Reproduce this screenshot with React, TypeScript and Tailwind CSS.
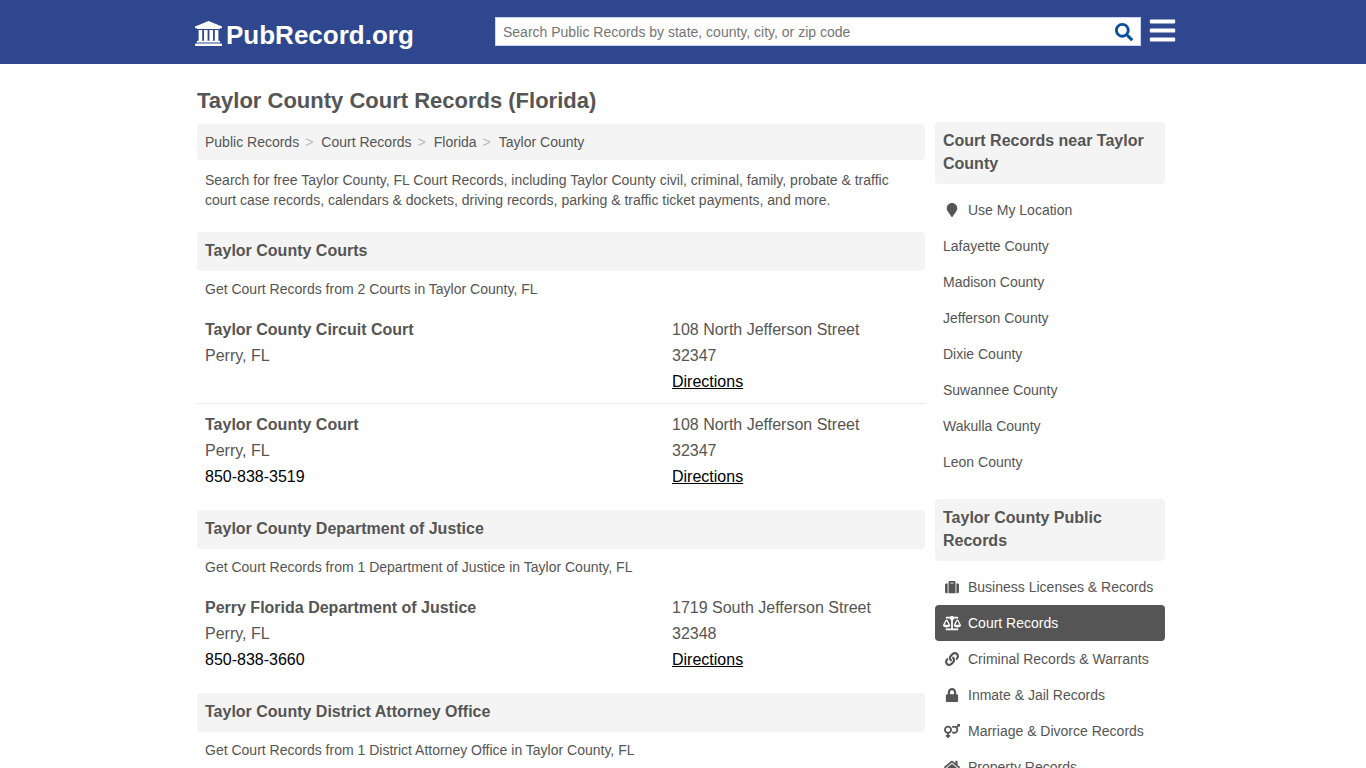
import type { ReactNode } from "react";
import type { IconType } from "react-icons";
import {
  FaBalanceScale,
  FaBars,
  FaHome,
  FaLink,
  FaLock,
  FaMapMarker,
  FaSearch,
  FaSuitcase,
  FaVenusMars,
} from "react-icons/fa";

type Office = {
  name: string;
  city: string;
  phone?: string;
  street: string;
  zip: string;
};

type OfficeGroup = { title: string; summary: string; offices: Office[] };

const crumbs = ["Public Records", "Court Records", "Florida", "Taylor County"];

const groups: OfficeGroup[] = [
  {
    title: "Taylor County Courts",
    summary: "Get Court Records from 2 Courts in Taylor County, FL",
    offices: [
      {
        name: "Taylor County Circuit Court",
        city: "Perry, FL",
        street: "108 North Jefferson Street",
        zip: "32347",
      },
      {
        name: "Taylor County Court",
        city: "Perry, FL",
        phone: "850-838-3519",
        street: "108 North Jefferson Street",
        zip: "32347",
      },
    ],
  },
  {
    title: "Taylor County Department of Justice",
    summary: "Get Court Records from 1 Department of Justice in Taylor County, FL",
    offices: [
      {
        name: "Perry Florida Department of Justice",
        city: "Perry, FL",
        phone: "850-838-3660",
        street: "1719 South Jefferson Street",
        zip: "32348",
      },
    ],
  },
  {
    title: "Taylor County District Attorney Office",
    summary: "Get Court Records from 1 District Attorney Office in Taylor County, FL",
    offices: [],
  },
];

const nearby = [
  "Lafayette County",
  "Madison County",
  "Jefferson County",
  "Dixie County",
  "Suwannee County",
  "Wakulla County",
  "Leon County",
];

const recordTypes: { label: string; icon: IconType; iconSize?: string; active?: boolean }[] = [
  { label: "Business Licenses & Records", icon: FaSuitcase },
  { label: "Court Records", icon: FaBalanceScale, iconSize: "size-[18px]", active: true },
  { label: "Criminal Records & Warrants", icon: FaLink },
  { label: "Inmate & Jail Records", icon: FaLock },
  { label: "Marriage & Divorce Records", icon: FaVenusMars, iconSize: "size-4" },
  { label: "Property Records", icon: FaHome, iconSize: "size-4" },
];

function CourthouseLogo() {
  return (
    <svg viewBox="0 0 1920 1792" fill="currentColor" aria-hidden="true" className="mt-[2px] mr-1 w-[27px] self-start">
      <path d="M960 0l960 384v128h-128q0 26-20.5 45t-48.5 19H197q-28 0-48.5-19T128 512H0V384zM256 640h256v768h128V640h256v768h128V640h256v768h128V640h256v768h59q28 0 48.5 19t20.5 45v64H128v-64q0-26 20.5-45t48.5-19h59V640zM1851 1600q28 0 48.5 19t20.5 45v128H0v-128q0-26 20.5-45t48.5-19h1782z" />
    </svg>
  );
}

function Header() {
  return (
    <header className="h-16 bg-[#2e478f]">
      <div className="mx-auto flex max-w-[988px] items-start pl-[6px]">
        <a href="#" className="flex w-[300px] shrink-0 items-center pt-[19px] text-white">
          <CourthouseLogo />
          <span className="text-[26px] leading-8 font-bold">PubRecord.org</span>
        </a>
        <form className="mt-[17px] flex h-[29px] min-w-0 flex-1 border border-[#ccd6ee] bg-white">
          <input
            type="search"
            aria-label="Search public records"
            placeholder="Search Public Records by state, county, city, or zip code"
            className="min-w-0 flex-1 px-[7px] text-sm text-[#555] outline-none placeholder:text-[#757575]"
          />
          <button type="submit" aria-label="Search" className="flex w-8 items-center justify-center text-[#0b4f9e]">
            <FaSearch className="size-[18px]" />
          </button>
        </form>
        <button type="button" aria-label="Menu" className="mt-4 ml-[7px] text-white">
          <FaBars className="size-[29px]" />
        </button>
      </div>
    </header>
  );
}

function OfficeEntry({ office }: { office: Office }) {
  return (
    <li className="flex px-2 py-2 text-base leading-[26px] not-last:border-b not-last:border-[#e9e9e9]">
      <div className="min-w-0 flex-1">
        <h3 className="font-bold">{office.name}</h3>
        <p>{office.city}</p>
        {office.phone && (
          <a href={`tel:${office.phone}`} className="text-black">
            {office.phone}
          </a>
        )}
      </div>
      <div className="w-[245px] shrink-0">
        <p>{office.street}</p>
        <p>{office.zip}</p>
        <a href="#" className="text-black underline">
          Directions
        </a>
      </div>
    </li>
  );
}

function SideHeading({ children }: { children: ReactNode }) {
  return (
    <h2 className="mb-2 rounded-sm bg-[#f4f4f4] px-2 pt-[7px] pb-[9px] text-base leading-[23px] font-bold">{children}</h2>
  );
}

type SideLinkProps = { label: string; icon?: IconType; iconSize?: string; active?: boolean };

function SideLink({ label, icon: Icon, iconSize = "size-[14px]", active }: SideLinkProps) {
  return (
    <li>
      <a
        href="#"
        className={
          active
            ? "flex h-9 items-center rounded-sm bg-[#555] px-2 text-sm text-white"
            : "flex h-9 items-center px-2 text-sm"
        }
      >
        {Icon && (
          <span className="mr-[7px] flex w-[18px] shrink-0 justify-center">
            <Icon className={iconSize} />
          </span>
        )}
        {label}
      </a>
    </li>
  );
}

export default function App() {
  return (
    <div className="min-h-screen bg-white font-['Liberation_Sans',Arial,sans-serif] text-[#555]">
      <Header />
      <div className="mx-auto flex max-w-[972px] items-start gap-[10px] pr-1">
        <main className="min-w-0 flex-1 pt-[21px]">
          <h1 className="mb-[7px] text-[22px] leading-8 font-bold">Taylor County Court Records (Florida)</h1>
          <nav aria-label="Breadcrumb" className="rounded-sm bg-[#f4f4f4] px-2">
            <ol className="flex h-9 items-center text-sm">
              {crumbs.map((crumb, i) => (
                <li key={crumb} className="flex items-center">
                  <a href="#">{crumb}</a>
                  {i < crumbs.length - 1 && (
                    <span aria-hidden="true" className="mr-2 ml-[6px] text-[#bbb]">
                      &gt;
                    </span>
                  )}
                </li>
              ))}
            </ol>
          </nav>
          <p className="px-2 pt-[10px] text-sm">
            Search for free Taylor County, FL Court Records, including Taylor County civil, criminal, family, probate
            &amp; traffic court case records, calendars &amp; dockets, driving records, parking &amp; traffic ticket
            payments, and more.
          </p>
          <div className="mt-[22px] flex flex-col gap-3">
            {groups.map((group) => (
              <section key={group.title}>
                <h2 className="rounded-sm bg-[#f4f4f4] px-2 pt-[7px] pb-2 text-base leading-6 font-bold">
                  {group.title}
                </h2>
                <p className="px-2 pt-2 pb-[10px] text-sm">{group.summary}</p>
                <ul>
                  {group.offices.map((office) => (
                    <OfficeEntry key={office.name} office={office} />
                  ))}
                </ul>
              </section>
            ))}
          </div>
        </main>
        <aside className="w-[230px] shrink-0 pt-[58px]">
          <SideHeading>Court Records near Taylor County</SideHeading>
          <ul>
            <SideLink label="Use My Location" icon={FaMapMarker} />
            {nearby.map((county) => (
              <SideLink key={county} label={county} />
            ))}
          </ul>
          <div className="mt-[19px]">
            <SideHeading>Taylor County Public Records</SideHeading>
            <ul>
              {recordTypes.map((type) => (
                <SideLink key={type.label} {...type} />
              ))}
            </ul>
          </div>
        </aside>
      </div>
    </div>
  );
}
